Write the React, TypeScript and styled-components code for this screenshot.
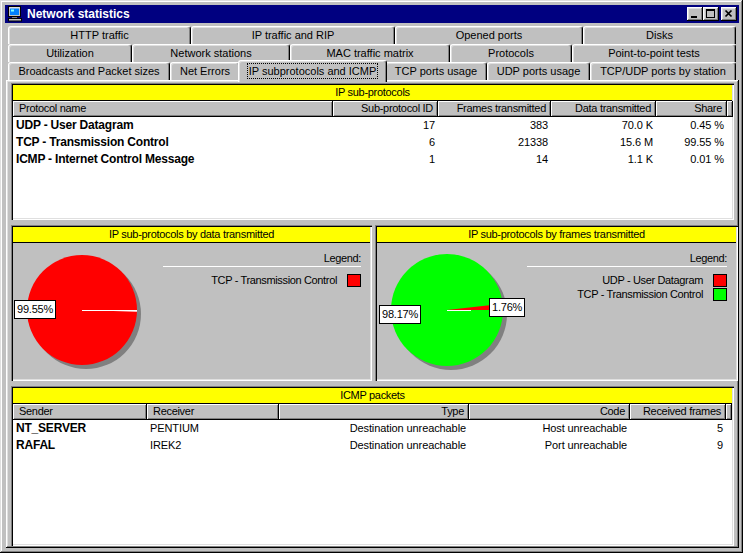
import React from "react";
import styled, { createGlobalStyle } from "styled-components";

const Global = createGlobalStyle`
  html, body { margin: 0; padding: 0; background: #c0c0c0; }
  body { font-family: "Liberation Sans", Arial, sans-serif; font-size: 11px; color: #000; }
  * { box-sizing: border-box; }
`;

const Window = styled.div`
  width: 743px;
  height: 553px;
  background: #c0c0c0;
  padding: 4px;
  display: flex;
  flex-direction: column;
  box-shadow: inset -1px -1px #000, inset 1px 1px #dfdfdf, inset -2px -2px #808080, inset 2px 2px #fff;
`;

const TitleBar = styled.div`
  height: 18px;
  margin: 1px 0 0 1px;
  background: #000080;
  color: #fff;
  display: flex;
  align-items: center;
  padding: 0 2px;
  font-weight: bold;
  font-size: 12px;
`;

const TitleText = styled.span`
  margin-left: 4px;
`;

const TitleButtons = styled.div`
  margin-left: auto;
  display: flex;
`;

const TitleButton = styled.div<{ $gap?: boolean }>`
  width: 16px;
  height: 14px;
  margin-left: ${(p) => (p.$gap ? "2px" : "0")};
  background: #c0c0c0;
  box-shadow: inset -1px -1px #000, inset 1px 1px #fff, inset -2px -2px #808080, inset 2px 2px #dfdfdf;
  display: flex;
  svg { display: block; }
`;

const TabControl = styled.div`
  flex: 1;
  margin: 3px 0 1px 2px;
  display: flex;
  flex-direction: column;
`;

const TabRow = styled.div`
  display: flex;
  height: 18px;
  padding: 0 3px 0 2px;
`;

const Tab = styled.div<{ $w: number; $active?: boolean }>`
  flex: none;
  width: ${(p) => (p.$active ? p.$w + 4 : p.$w)}px;
  height: ${(p) => (p.$active ? 22 : 18)}px;
  margin: ${(p) => (p.$active ? "-2px -2px 0 -2px" : "0")};
  position: relative;
  z-index: ${(p) => (p.$active ? 2 : 1)};
  background: #c0c0c0;
  border-top: 1px solid #fff;
  border-left: 1px solid #fff;
  border-right: 1px solid #000;
  border-radius: 3px 3px 0 0;
  box-shadow: inset -1px 0 #808080, inset 1px 1px #dfdfdf;
  text-align: center;
  line-height: 16px;
  padding-top: ${(p) => (p.$active ? "2px" : "0")};
  white-space: nowrap;
`;

const FocusText = styled.span`
  display: inline-block;
  line-height: 14px;
  padding: 0 1px;
  outline: 1px dotted #000;
`;

const Panel = styled.div`
  flex: 1;
  display: flex;
  flex-direction: column;
  gap: 5px;
  padding: 3px 5px 2px 5px;
  box-shadow: inset -1px -1px #000, inset 1px 1px #fff, inset -2px -2px #808080, inset 2px 2px #dfdfdf;
`;

const Section = styled.div<{ $h: number; $gray?: boolean }>`
  height: ${(p) => p.$h}px;
  flex: none;
  display: flex;
  flex-direction: column;
  padding: 2px;
  background: ${(p) => (p.$gray ? "#c0c0c0" : "#fff")};
  box-shadow: inset 1px 1px #808080, inset 2px 2px #000, inset -1px -1px #fff, inset -2px -2px #dfdfdf;
`;

const ChartRow = styled.div`
  display: flex;
  gap: 3px;
`;

const ChartSection = styled(Section)<{ $w?: number }>`
  ${(p) => (p.$w ? `width: ${p.$w}px;` : "flex: 1;")}
`;

const SectionTitle = styled.div`
  height: 16px;
  flex: none;
  background: #ffff00;
  border-bottom: 1px solid #000;
  text-align: center;
  line-height: 15px;
  letter-spacing: -0.3px;
`;

const HeaderRow = styled.div`
  display: flex;
  height: 16px;
  flex: none;
`;

const HeaderCell = styled.div<{ $w?: number; $right?: boolean }>`
  ${(p) => (p.$w ? `width: ${p.$w}px; flex: none;` : "flex: 1;")}
  height: 16px;
  line-height: 15px;
  background: #c0c0c0;
  box-shadow: inset -1px -1px #000, inset 1px 1px #fff, inset -2px -2px #808080;
  text-align: ${(p) => (p.$right ? "right" : "left")};
  padding: ${(p) => (p.$right ? "0 5px 0 0" : "0 0 0 6px")};
  letter-spacing: -0.3px;
  white-space: nowrap;
  overflow: hidden;
`;

const DataRow = styled.div`
  display: flex;
  height: 17px;
`;

const Cell = styled.div<{ $w?: number; $right?: boolean; $bold?: boolean }>`
  ${(p) => (p.$w ? `width: ${p.$w}px; flex: none;` : "flex: 1;")}
  line-height: 17px;
  padding: 0 3px;
  text-align: ${(p) => (p.$right ? "right" : "left")};
  font-weight: ${(p) => (p.$bold ? "bold" : "normal")};
  font-size: ${(p) => (p.$bold ? "12px" : "11px")};
  letter-spacing: ${(p) => (p.$bold ? "-0.2px" : "-0.1px")};
  white-space: nowrap;
  overflow: hidden;
`;

const ChartBody = styled.div`
  flex: 1;
  display: flex;
`;

const Canvas = styled.div`
  position: relative;
  width: 150px;
  height: 136px;
  flex: none;
  svg { display: block; }
`;

const PieLabel = styled.div`
  position: absolute;
  height: 19px;
  line-height: 17px;
  padding: 0 2px;
  background: #fff;
  border: 1px solid #000;
  font-size: 11px;
  letter-spacing: -0.2px;
  white-space: nowrap;
`;

const Legend = styled.div<{ $w: number }>`
  margin-left: auto;
  margin-right: 9px;
  width: ${(p) => p.$w}px;
  padding-top: 8px;
  display: flex;
  flex-direction: column;
  letter-spacing: -0.35px;
`;

const LegendTitle = styled.div`
  text-align: right;
  line-height: 14px;
`;

const LegendRule = styled.div`
  height: 1px;
  margin-top: 1px;
  margin-bottom: 6px;
  background: #fff;
`;

const LegendItem = styled.div`
  display: flex;
  justify-content: flex-end;
  align-items: center;
  gap: 10px;
  height: 14px;
  white-space: nowrap;
`;

const Swatch = styled.div<{ $color: string }>`
  width: 14px;
  height: 13px;
  background: ${(p) => p.$color};
  border: 1px solid #000;
`;

type TabDef = { label: string; w: number; active?: boolean };

const tabRows: TabDef[][] = [
  [
    { label: "HTTP traffic", w: 183 },
    { label: "IP traffic and RIP", w: 204 },
    { label: "Opened ports", w: 188 },
    { label: "Disks", w: 153 },
  ],
  [
    { label: "Utilization", w: 124 },
    { label: "Network stations", w: 158 },
    { label: "MAC traffic matrix", w: 160 },
    { label: "Protocols", w: 122 },
    { label: "Point-to-point tests", w: 164 },
  ],
  [
    { label: "Broadcasts and Packet sizes", w: 162 },
    { label: "Net Errors", w: 70 },
    { label: "IP subprotocols and ICMP", w: 145, active: true },
    { label: "TCP ports usage", w: 102 },
    { label: "UDP ports usage", w: 103 },
    { label: "TCP/UDP ports by station", w: 146 },
  ],
];

const ipCols = [
  { label: "Protocol name", w: 320, right: false },
  { label: "Sub-protocol ID", w: 105, right: true },
  { label: "Frames transmitted", w: 113, right: true },
  { label: "Data transmitted", w: 105, right: true },
  { label: "Share", w: 71, right: true },
];

const ipRows = [
  ["UDP - User Datagram", "17", "383", "70.0 K", "0.45 %"],
  ["TCP - Transmission Control", "6", "21338", "15.6 M", "99.55 %"],
  ["ICMP - Internet Control Message", "1", "14", "1.1 K", "0.01 %"],
];

const icmpCols = [
  { label: "Sender", w: 134, right: false },
  { label: "Receiver", w: 132, right: false },
  { label: "Type", w: 190, right: true },
  { label: "Code", w: 161, right: true },
  { label: "Received frames", w: 96, right: true },
];

const icmpRows = [
  ["NT_SERVER", "PENTIUM", "Destination unreachable", "Host unreachable", "5"],
  ["RAFAL", "IREK2", "Destination unreachable", "Port unreachable", "9"],
];

const ComputerIcon = () => (
  <svg width="16" height="16" viewBox="0 0 16 16">
    <rect x="1.5" y="0.5" width="12" height="10" fill="#c0c0c0" stroke="#000" />
    <rect x="2.5" y="1.5" width="10" height="1" fill="#fff" />
    <rect x="3" y="2.5" width="9" height="6.5" fill="#0080ff" />
    <rect x="4" y="3.5" width="3" height="2" fill="#80ffff" />
    <rect x="5" y="11" width="5" height="1.5" fill="#808080" />
    <rect x="1.5" y="12.5" width="13" height="2.5" fill="#c0c0c0" stroke="#000" />
  </svg>
);

export default function App() {
  return (
    <>
      <Global />
      <Window>
        <TitleBar>
          <ComputerIcon />
          <TitleText>Network statistics</TitleText>
          <TitleButtons>
            <TitleButton>
              <svg width="16" height="14" viewBox="0 0 16 14">
                <rect x="4" y="9" width="6" height="2" fill="#000" />
              </svg>
            </TitleButton>
            <TitleButton>
              <svg width="16" height="14" viewBox="0 0 16 14">
                <rect x="3.5" y="2.5" width="8" height="8" fill="none" stroke="#000" />
                <rect x="3" y="2" width="9" height="2" fill="#000" />
              </svg>
            </TitleButton>
            <TitleButton $gap>
              <svg width="16" height="14" viewBox="0 0 16 14">
                <path d="M4.5 3.5 L10.5 9.5 M10.5 3.5 L4.5 9.5" stroke="#000" strokeWidth="1.7" />
              </svg>
            </TitleButton>
          </TitleButtons>
        </TitleBar>

        <TabControl>
          {tabRows.map((row, i) => (
            <TabRow key={i}>
              {row.map((t) => (
                <Tab key={t.label} $w={t.w} $active={t.active}>
                  {t.active ? <FocusText>{t.label}</FocusText> : t.label}
                </Tab>
              ))}
            </TabRow>
          ))}

          <Panel>
            <Section $h={137}>
              <SectionTitle>IP sub-protocols</SectionTitle>
              <HeaderRow>
                {ipCols.map((c) => (
                  <HeaderCell key={c.label} $w={c.w} $right={c.right}>
                    {c.label}
                  </HeaderCell>
                ))}
                <HeaderCell />
              </HeaderRow>
              {ipRows.map((r) => (
                <DataRow key={r[0]}>
                  {r.map((v, j) => (
                    <Cell key={j} $w={ipCols[j].w} $right={j > 0} $bold={j === 0}>
                      {v}
                    </Cell>
                  ))}
                </DataRow>
              ))}
            </Section>

            <ChartRow>
              <ChartSection $h={156} $gray $w={361}>
                <SectionTitle>IP sub-protocols by data transmitted</SectionTitle>
                <ChartBody>
                  <Canvas>
                    <svg width="150" height="136" viewBox="0 0 150 136">
                      <circle cx="73" cy="71" r="55" fill="#808080" />
                      <circle cx="69" cy="67" r="55" fill="#ff0000" />
                      <path d="M69 67 L124 67 L123.98 68.7 Z" fill="#fff" />
                      <line x1="69" y1="67.5" x2="124" y2="67.5" stroke="#fff" strokeWidth="1" />
                    </svg>
                    <PieLabel style={{ left: 1, top: 57 }}>99.55%</PieLabel>
                  </Canvas>
                  <Legend $w={203}>
                    <LegendTitle>Legend:</LegendTitle>
                    <LegendRule />
                    <LegendItem>
                      TCP - Transmission Control
                      <Swatch $color="#ff0000" />
                    </LegendItem>
                  </Legend>
                </ChartBody>
              </ChartSection>

              <ChartSection $h={156} $gray>
                <SectionTitle>IP sub-protocols by frames transmitted</SectionTitle>
                <ChartBody>
                  <Canvas>
                    <svg width="150" height="136" viewBox="0 0 150 136">
                      <circle cx="74" cy="71" r="56" fill="#808080" />
                      <circle cx="70" cy="67" r="56" fill="#00ff00" />
                      <path d="M70 67 L126 67 A56 56 0 0 0 125.66 60.82 Z" fill="#ff0000" />
                      <line x1="70" y1="67.5" x2="94" y2="67.5" stroke="#fff" strokeWidth="1" />
                    </svg>
                    <PieLabel style={{ left: 2, top: 62 }}>98.17%</PieLabel>
                    <PieLabel style={{ left: 112, top: 55 }}>1.76%</PieLabel>
                  </Canvas>
                  <Legend $w={200}>
                    <LegendTitle>Legend:</LegendTitle>
                    <LegendRule />
                    <LegendItem>
                      UDP - User Datagram
                      <Swatch $color="#ff0000" />
                    </LegendItem>
                    <LegendItem>
                      TCP - Transmission Control
                      <Swatch $color="#00ff00" />
                    </LegendItem>
                  </Legend>
                </ChartBody>
              </ChartSection>
            </ChartRow>

            <Section $h={160}>
              <SectionTitle>ICMP packets</SectionTitle>
              <HeaderRow>
                {icmpCols.map((c) => (
                  <HeaderCell key={c.label} $w={c.w} $right={c.right}>
                    {c.label}
                  </HeaderCell>
                ))}
                <HeaderCell />
              </HeaderRow>
              {icmpRows.map((r) => (
                <DataRow key={r[0]}>
                  {r.map((v, j) => (
                    <Cell key={j} $w={icmpCols[j].w} $right={j > 1} $bold={j === 0}>
                      {v}
                    </Cell>
                  ))}
                </DataRow>
              ))}
            </Section>
          </Panel>
        </TabControl>
      </Window>
    </>
  );
}
